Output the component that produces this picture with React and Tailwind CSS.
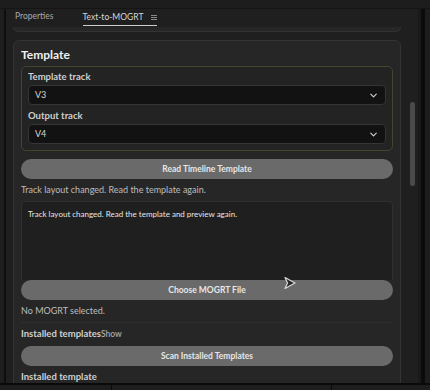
import React from 'react';
import { ChevronDown } from 'lucide-react';

const font = { fontFamily: 'Lato, "Noto Sans", sans-serif' };

const Select = ({ value }) => (
  <div className="flex h-[20px] items-center justify-between rounded-[4px] border border-[#353535] bg-[#121212] pl-[6px] pr-[6px]">
    <span className="text-[9px] text-[#d8d8d8]">{value}</span>
    <ChevronDown className="h-[11px] w-[11px] text-[#d0d0d0]" strokeWidth={2.5} />
  </div>
);

const PillButton = ({ children }) => (
  <div className="flex h-[20px] shrink-0 items-center justify-center rounded-full bg-[#6a6a6a] text-[8.5px] font-bold text-[#e6e6e6]">
    {children}
  </div>
);

const App = () => {
  return (
    <div style={font} className="flex h-[390px] w-[430px] flex-col overflow-hidden bg-[#1c1c1c]">
      {/* top strip */}
      <div className="h-[9px] shrink-0 border-b border-[#151515] bg-[#1d1d1d]" />

      <div className="flex h-[374px] shrink-0">
        <div className="w-[4px] bg-[#1e1e1e]" />
        <div className="w-[2px] bg-[#0e0e0e]" />

        {/* panel */}
        <div className="relative flex w-[402px] flex-col overflow-hidden bg-[#1f1f1f]">
          {/* tabs */}
          <div className="flex h-[17px] shrink-0 items-end gap-[29px] pl-[9px] text-[8.5px] leading-[11px]">
            <span className="pb-[4px] text-[#a9a9a9]">Properties</span>
            <div className="flex items-center gap-[8px] border-b-[1.5px] border-[#cfcfcf] pb-[2px]">
              <span className="text-[#d6d6d6]">Text-to-MOGRT</span>
              <span className="flex flex-col gap-[1px]">
                <span className="h-[1px] w-[6px] bg-[#8a8a8a]" />
                <span className="h-[1px] w-[6px] bg-[#8a8a8a]" />
                <span className="h-[1px] w-[6px] bg-[#8a8a8a]" />
              </span>
            </div>
          </div>

          {/* previous card bottom */}
          <div className="mx-[7px] mt-[1px] h-[5px] shrink-0 rounded-b-[6px] border border-t-0 border-[#323232] bg-[#272727]" />

          {/* template card */}
          <div className="mx-[7px] mt-[8px] shrink-0 rounded-[6px] border border-[#333333] bg-[#262626] px-[7px] pt-[6px]">
            <h2 className="text-[12px] font-bold leading-[15px] text-[#f0f0f0]">Template</h2>

            <div className="mt-[4px] rounded-[5px] border border-[#46432f] bg-[#232323] px-[6px] pb-[6px] pt-[3px]">
              <div className="text-[9.5px] font-bold leading-[14px] text-[#cfcfcf]">Template track</div>
              <div className="mt-[1px]">
                <Select value="V3" />
              </div>
              <div className="mt-[4px] text-[9.5px] font-bold leading-[14px] text-[#cfcfcf]">Output track</div>
              <div className="mt-[1px]">
                <Select value="V4" />
              </div>
            </div>

            <div className="mt-[8px]">
              <PillButton>Read Timeline Template</PillButton>
            </div>
            <p className="mt-[4px] text-[9px] leading-[14px] text-[#bdbdbd]">
              Track layout changed. Read the template again.
            </p>

            <div className="mt-[4px] h-[79px] rounded-t-[4px] border border-b-0 border-[#2f2f2f] bg-[#1f1f1f] px-[6px] pt-[6px]">
              <p className="text-[8px] text-[#e6e6e6]">
                Track layout changed. Read the template and preview again.
              </p>
            </div>
            <PillButton>Choose MOGRT File</PillButton>

            <p className="mt-[4px] text-[9px] leading-[14px] text-[#bdbdbd]">No MOGRT selected.</p>
            <div className="mt-[4px] h-px bg-[#2e2e2e]" />

            <div className="mt-[4px] flex items-baseline text-[9.5px] leading-[14px]">
              <span className="font-bold text-[#cfcfcf]">Installed templates</span>
              <span className="text-[8.5px] font-semibold text-[#a8a8a8]">Show</span>
            </div>
            <div className="mt-[5px]">
              <PillButton>Scan Installed Templates</PillButton>
            </div>
            <div className="mt-[4px] text-[9.5px] font-bold leading-[14px] text-[#cfcfcf]">Installed template</div>
            <div className="h-[20px]" />
          </div>

          {/* mouse cursor */}
          <svg className="absolute left-[277px] top-[267px]" width="14" height="14" viewBox="0 0 14 14">
            <path d="M2 1.5 L12 7 L2 12.5 L4.5 7 Z" fill="#2a2a2a" stroke="#d8d8d8" strokeWidth="1.2" strokeLinejoin="round" />
          </svg>
        </div>

        {/* scroll gutter */}
        <div className="w-[10px] bg-[#1f1f1f] pl-[2px] pt-[93px]">
          <div className="h-[84px] w-[5px] rounded-full bg-[#4a4a4a]" />
        </div>
        <div className="w-[3px] bg-[#1a1a1a]" />
        <div className="w-[4px] bg-[#0b0b0b]" />
        <div className="flex-1 bg-[#1d1d1d]" />
      </div>

      {/* bottom strip */}
      <div className="flex flex-1 border-t-2 border-[#0a0a0a]">
        <div className="w-[112px] border-r border-[#0a0a0a] bg-[#1d1d1d]" />
        <div className="w-[220px] border-r border-[#0a0a0a] bg-[#1d1d1d]" />
        <div className="flex-1 bg-[#1d1d1d]" />
      </div>
    </div>
  );
};

export default App;
